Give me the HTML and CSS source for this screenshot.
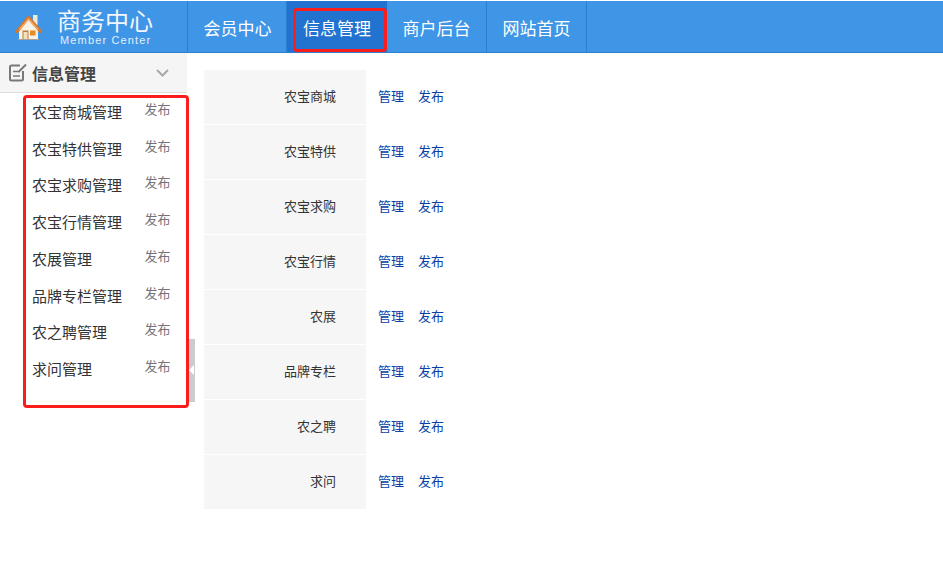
FILE: index.html
```html
<!DOCTYPE html>
<html lang="zh">
<head>
<meta charset="utf-8">
<title>商务中心</title>
<link rel="stylesheet" href="styles.css">
</head>
<body>
<header class="topbar">
  <div class="brand">
    <svg class="brand-icon" width="28" height="28" viewBox="15 14 28 28">
      <rect x="33" y="15" width="4.500" height="10" fill="#efe9dd"/>
      <path d="M19 30 L28.500 19 L38 30 V39.500 H19Z" fill="#f7f1e6"/>
      <path d="M17 31.500 L28.500 17.500 L40.500 31.500" fill="none" stroke="#d9762a" stroke-width="3.200" stroke-linejoin="round" stroke-linecap="round"/>
      <path d="M19.500 29.500 L28.500 19 L38 29.500" fill="none" stroke="#f4b26a" stroke-width="1.200"/>
      <rect x="22.500" y="30.500" width="6" height="8.500" fill="#b9803f"/>
      <rect x="23.500" y="32" width="4" height="7" fill="#f3dfbb"/>
      <rect x="30" y="30.500" width="5.500" height="5" fill="#e58c25"/>
      <path d="M18 39.500 H39" stroke="#a9a196" stroke-width="1"/>
    </svg>
    <div class="brand-text">
      <div class="brand-title">商务中心</div>
      <div class="brand-sub">Member Center</div>
    </div>
  </div>
  <nav class="nav">
    <a class="nav-item nav-first">会员中心</a>
    <a class="nav-item nav-active">信息管理</a>
    <a class="nav-item">商户后台</a>
    <a class="nav-item">网站首页</a>
  </nav>
</header>
<div class="body-row">
  <aside class="sidebar">
    <div class="side-head">
      <svg class="side-icon" width="19" height="19" viewBox="8 64 19 19">
        <path d="M20 66.500 H11.500 Q10 66.500 10 68 V80 Q10 81.500 11.500 81.500 H21.500 Q23 81.500 23 80 V72" fill="none" stroke="#787878" stroke-width="2"/>
        <path d="M13 72.500 H19 M13 77 H20" stroke="#787878" stroke-width="1.500"/>
        <path d="M18.500 73 L26 65.500" stroke="#787878" stroke-width="2"/>
      </svg>
      <span class="side-title">信息管理</span>
      <svg class="side-chevron" width="13" height="8" viewBox="0 0 13 8">
        <path d="M1 1 L6.500 6.500 L12 1" fill="none" stroke="#a8a8a8" stroke-width="2"/>
      </svg>
    </div>
    <ul class="side-list">
      <li class="side-row"><span>农宝商城管理</span><a class="side-pub">发布</a></li>
      <li class="side-row"><span>农宝特供管理</span><a class="side-pub">发布</a></li>
      <li class="side-row"><span>农宝求购管理</span><a class="side-pub">发布</a></li>
      <li class="side-row"><span>农宝行情管理</span><a class="side-pub">发布</a></li>
      <li class="side-row"><span>农展管理</span><a class="side-pub">发布</a></li>
      <li class="side-row"><span>品牌专栏管理</span><a class="side-pub">发布</a></li>
      <li class="side-row"><span>农之聘管理</span><a class="side-pub">发布</a></li>
      <li class="side-row"><span>求问管理</span><a class="side-pub">发布</a></li>
    </ul>
    <div class="side-toggle"><i class="side-arrow"></i></div>
    <div class="mark mark-side"></div>
  </aside>
  <main class="content">
    <table class="info-table">
      <tr><th>农宝商城</th><td><a>管理</a><a>发布</a></td></tr>
      <tr><th>农宝特供</th><td><a>管理</a><a>发布</a></td></tr>
      <tr><th>农宝求购</th><td><a>管理</a><a>发布</a></td></tr>
      <tr><th>农宝行情</th><td><a>管理</a><a>发布</a></td></tr>
      <tr><th>农展</th><td><a>管理</a><a>发布</a></td></tr>
      <tr><th>品牌专栏</th><td><a>管理</a><a>发布</a></td></tr>
      <tr><th>农之聘</th><td><a>管理</a><a>发布</a></td></tr>
      <tr><th>求问</th><td><a>管理</a><a>发布</a></td></tr>
    </table>
  </main>
</div>
<div class="mark mark-nav"></div>
</body>
</html>
```
FILE: styles.css
```css
* { box-sizing: border-box; }
html, body { margin: 0; padding: 0; background: #fff; }
body {
  position: relative;
  height: 587px;
  overflow: hidden;
  font-family: "Noto Sans CJK SC", "Liberation Sans", sans-serif;
  color: #333;
}
.topbar {
  display: flex;
  height: 52px;
  margin-top: 1px;
  background: #3f95e6;
  border-bottom: 1px solid #2f80cf;
  color: #fff;
}
.brand {
  display: flex;
  width: 188px;
  padding-left: 15px;
  border-right: 1px solid #2c7fd0;
}
.brand-icon { margin-top: 13px; flex: none; }
.brand-text { margin-left: 14px; }
.brand-title {
  font-size: 24px;
  line-height: 28px;
  margin-top: 5px;
  color: #f2f7fd;
  white-space: nowrap;
}
.brand-sub {
  font-family: "Liberation Sans", sans-serif;
  font-size: 11px;
  line-height: 12px;
  margin-left: 3px;
  letter-spacing: 1.150px;
  color: #e2effb;
  white-space: nowrap;
}
.nav { display: flex; }
.nav-item {
  display: block;
  width: 100px;
  text-align: center;
  font-size: 17px;
  line-height: 53px;
  height: 51px;
  color: #fff;
  border-right: 1px solid #2c7fd0;
}
.nav-first { width: 99px; padding-left: 1px; }
.nav-active { background: #2272d0; border-right: 0; }
.body-row { display: flex; }
.sidebar { position: relative; width: 187px; flex: none; }
.side-head {
  display: flex;
  align-items: center;
  height: 40px;
  padding-left: 8px;
  background: #f5f5f5;
  border-bottom: 1px solid #ddd;
}
.side-icon { flex: none; }
.side-title {
  margin-left: 5px;
  font-size: 16px;
  font-weight: 700;
  color: #444;
}
.side-chevron { margin-left: 60px; }
.side-list {
  list-style: none;
  margin: 0;
  padding: 0.900px 16.500px 0 32px;
}
.side-row {
  display: flex;
  justify-content: space-between;
  height: 36.750px;
  font-size: 15px;
  line-height: 36px;
  color: #333;
}
.side-pub {
  font-size: 13px;
  line-height: 30px;
  color: #77727a;
}
.side-toggle {
  position: absolute;
  left: 189px;
  top: 286px;
  width: 6px;
  height: 63px;
  background: #ccc;
}
.side-arrow {
  position: absolute;
  left: 0;
  top: 26px;
  border-style: solid;
  border-width: 5px 5px 5px 0;
  border-color: transparent #fff transparent transparent;
}
.content { padding: 17px 0 0 17px; }
.info-table { border-collapse: separate; border-spacing: 0; }
.info-table tr { height: 55px; }
.info-table th {
  width: 162px;
  padding: 0 30px 3px 0;
  background: #f6f6f6;
  border-bottom: 1px solid #fff;
  font-size: 13px;
  font-weight: 400;
  text-align: right;
  color: #333;
}
.info-table td { padding: 0 0 4px 12px; font-size: 13px; }
.info-table a { margin-right: 14px; color: #0a3fa8; }
.mark {
  position: absolute;
  border: 3px solid #fb1c1c;
  border-radius: 4px;
  pointer-events: none;
}
.mark-nav { left: 293px; top: 8px; width: 94px; height: 44px; }
.mark-side { left: 23px; top: 42px; width: 166px; height: 313px; }
```
